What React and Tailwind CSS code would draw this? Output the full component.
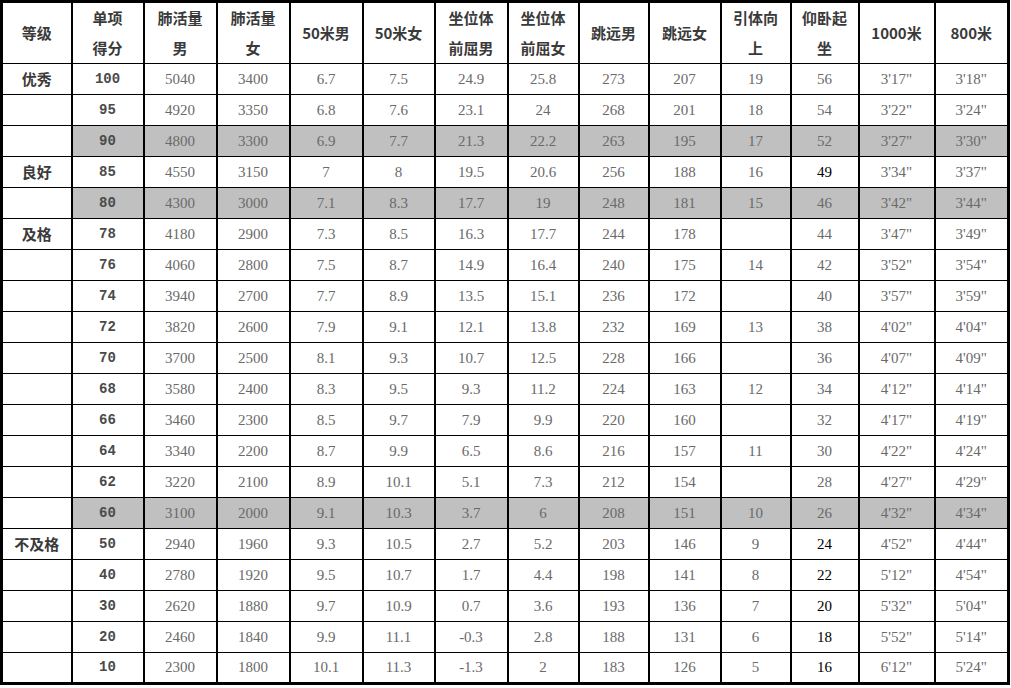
import React from "react";

const widths = [70, 72, 73, 73, 73, 72, 73, 71, 70, 72, 70, 68, 76, 74];

const headers = [
  ["等级"],
  ["单项", "得分"],
  ["肺活量", "男"],
  ["肺活量", "女"],
  ["50米男"],
  ["50米女"],
  ["坐位体", "前屈男"],
  ["坐位体", "前屈女"],
  ["跳远男"],
  ["跳远女"],
  ["引体向", "上"],
  ["仰卧起", "坐"],
  ["1000米"],
  ["800米"],
];

const rows = [
  ["优秀", "100", "5040", "3400", "6.7", "7.5", "24.9", "25.8", "273", "207", "19", "56", "3'17\"", "3'18\""],
  ["", "95", "4920", "3350", "6.8", "7.6", "23.1", "24", "268", "201", "18", "54", "3'22\"", "3'24\""],
  ["", "90", "4800", "3300", "6.9", "7.7", "21.3", "22.2", "263", "195", "17", "52", "3'27\"", "3'30\""],
  ["良好", "85", "4550", "3150", "7", "8", "19.5", "20.6", "256", "188", "16", "49", "3'34\"", "3'37\""],
  ["", "80", "4300", "3000", "7.1", "8.3", "17.7", "19", "248", "181", "15", "46", "3'42\"", "3'44\""],
  ["及格", "78", "4180", "2900", "7.3", "8.5", "16.3", "17.7", "244", "178", "", "44", "3'47\"", "3'49\""],
  ["", "76", "4060", "2800", "7.5", "8.7", "14.9", "16.4", "240", "175", "14", "42", "3'52\"", "3'54\""],
  ["", "74", "3940", "2700", "7.7", "8.9", "13.5", "15.1", "236", "172", "", "40", "3'57\"", "3'59\""],
  ["", "72", "3820", "2600", "7.9", "9.1", "12.1", "13.8", "232", "169", "13", "38", "4'02\"", "4'04\""],
  ["", "70", "3700", "2500", "8.1", "9.3", "10.7", "12.5", "228", "166", "", "36", "4'07\"", "4'09\""],
  ["", "68", "3580", "2400", "8.3", "9.5", "9.3", "11.2", "224", "163", "12", "34", "4'12\"", "4'14\""],
  ["", "66", "3460", "2300", "8.5", "9.7", "7.9", "9.9", "220", "160", "", "32", "4'17\"", "4'19\""],
  ["", "64", "3340", "2200", "8.7", "9.9", "6.5", "8.6", "216", "157", "11", "30", "4'22\"", "4'24\""],
  ["", "62", "3220", "2100", "8.9", "10.1", "5.1", "7.3", "212", "154", "", "28", "4'27\"", "4'29\""],
  ["", "60", "3100", "2000", "9.1", "10.3", "3.7", "6", "208", "151", "10", "26", "4'32\"", "4'34\""],
  ["不及格", "50", "2940", "1960", "9.3", "10.5", "2.7", "5.2", "203", "146", "9", "24", "4'52\"", "4'44\""],
  ["", "40", "2780", "1920", "9.5", "10.7", "1.7", "4.4", "198", "141", "8", "22", "5'12\"", "4'54\""],
  ["", "30", "2620", "1880", "9.7", "10.9", "0.7", "3.6", "193", "136", "7", "20", "5'32\"", "5'04\""],
  ["", "20", "2460", "1840", "9.9", "11.1", "-0.3", "2.8", "188", "131", "6", "18", "5'52\"", "5'14\""],
  ["", "10", "2300", "1800", "10.1", "11.3", "-1.3", "2", "183", "126", "5", "16", "6'12\"", "5'24\""],
];

const grayRows = new Set(["90", "80", "60"]);
const blackSitups = new Set(["49", "24", "22", "20", "18", "16"]);

export default function App() {
  return (
    <div className="bg-white w-[1011px] h-[688px] overflow-hidden">
      <table className="border-collapse table-fixed border-[3px] border-black w-[1009px]">
        <colgroup>
          {widths.map((w, i) => (
            <col key={i} style={{ width: w }} />
          ))}
        </colgroup>
        <thead>
          <tr className="h-[61px]">
            {headers.map((h, i) => (
              <th
                key={i}
                className="border-x-2 border-y border-black p-0 text-center align-middle font-bold text-[15px] leading-[30px] text-[#3a3a3a] [font-family:'Noto_Sans_CJK_SC',sans-serif]"
              >
                {h.map((line, j) => (
                  <div key={j}>{line}</div>
                ))}
              </th>
            ))}
          </tr>
        </thead>
        <tbody>
          {rows.map((r) => {
            const gray = grayRows.has(r[1]);
            return (
              <tr key={r[1]} className="h-[31px]">
                {r.map((c, i) => {
                  let cls =
                    "border-x-2 border-y border-black p-0 text-center align-middle ";
                  if (gray && i > 0) cls += "bg-[#c0c0c0] ";
                  if (i === 0) {
                    cls +=
                      "font-bold text-[15px] text-[#3a3a3a] [font-family:'Noto_Sans_CJK_SC',sans-serif]";
                  } else if (i === 1) {
                    cls +=
                      "font-bold text-[14px] text-[#4a4a4a] [font-family:'Liberation_Mono',monospace]";
                  } else {
                    const black = i === 11 && blackSitups.has(c);
                    cls +=
                      "text-[15px] [font-family:'Liberation_Serif',serif] " +
                      (black ? "text-black" : "text-[#6a6a6a]");
                  }
                  return (
                    <td key={i} className={cls}>
                      {c}
                    </td>
                  );
                })}
              </tr>
            );
          })}
        </tbody>
      </table>
    </div>
  );
}
